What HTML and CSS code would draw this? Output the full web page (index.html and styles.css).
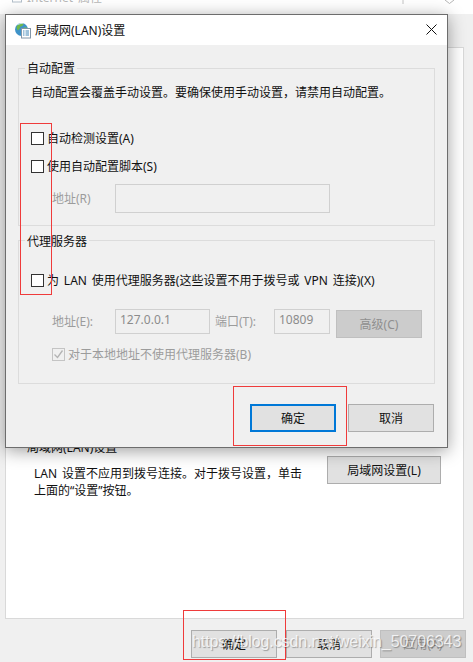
FILE: index.html
```html
<!DOCTYPE html>
<html lang="zh-CN">
<head>
<meta charset="utf-8">
<title>局域网(LAN)设置</title>
<link rel="stylesheet" href="styles.css">
</head>
<body>
<div class="screen">
  <svg class="defs" width="0" height="0">
    <symbol id="net-icon" viewBox="0 0 18 18">
      <circle cx="7.500" cy="7.500" r="6.500" fill="#3f93c9"/>
      <path d="M3 4c2-2 4-3 6-2.500 1 1 0 2-1 2.500-1 1-2 0-2 1.500 0 1.500-1 1-1.500 2.500C3.500 9 2 6 3 4z" fill="#6fb84a"/>
      <path d="M9 6c2-1 4-1 4.500 1 0 2-1 3-2 3-1-1-3-2-2.500-4z" fill="#79bd50"/>
      <path d="M2.500 3.500C4 1.500 7 .5 10 1.500 7 1.500 4.500 2.500 2.500 3.500z" fill="#d5ecf8"/>
      <rect x="7.500" y="6.500" width="9" height="9.500" fill="#fff" stroke="#8296a8"/>
      <path d="M9 9h1.500M11.500 9h3.500M9 11h1.500M11.500 11h3.500M9 13h1.500M11.500 13h3.500" stroke="#3f86b8"/>
    </symbol>
  </svg>
  <div class="back-window">
    <div class="back-title">
      <svg class="back-icon" width="18" height="18"><use href="#net-icon"/></svg>
      <span class="back-title-text">Internet 属性</span>
      <span class="back-controls">
        <svg class="back-max" width="2" height="4" viewBox="0 0 2 4"><path d="M1 0v4" stroke="#c4c4c4"/></svg>
        <svg class="back-close" width="11" height="4" viewBox="0 0 11 4"><path d="M1 0l4.500 3.500L10 0" fill="none" stroke="#b5b5b5"/></svg>
      </span>
    </div>
    <div class="back-panel">
      <div class="back-legend">局域网(LAN)设置</div>
      <div class="lan-row">
        <p class="lan-text">LAN 设置不应用到拨号连接。对于拨号设置，单击<br>上面的“设置”按钮。</p>
        <button class="btn btn-lan" type="button">局域网设置(L)</button>
      </div>
    </div>
    <div class="back-footer">
      <button class="btn" type="button">确定</button>
      <button class="btn" type="button">取消</button>
      <button class="btn btn-disabled" type="button">应用(A)</button>
    </div>
  </div>

  <div class="dialog">
    <div class="dialog-title">
      <svg class="globe" width="18" height="18"><use href="#net-icon"/></svg>
      <span class="dialog-title-text">局域网(LAN)设置</span>
      <svg class="close" width="11" height="11" viewBox="0 0 11 11"><path d="M.5.500l10 10M10.500.500l-10 10" stroke="#111" stroke-width="1"/></svg>
    </div>
    <div class="dialog-body">
      <fieldset class="group group-auto">
        <legend>自动配置</legend>
        <p class="desc">自动配置会覆盖手动设置。要确保使用手动设置，请禁用自动配置。</p>
        <label class="check check-first"><span class="box"></span>自动检测设置(A)</label>
        <label class="check check-second"><span class="box"></span>使用自动配置脚本(S)</label>
        <div class="script-row">
          <span class="muted field-label">地址(R)</span>
          <span class="field field-script"></span>
        </div>
      </fieldset>
      <fieldset class="group group-proxy">
        <legend>代理服务器</legend>
        <label class="check check-proxy"><span class="box"></span><span class="proxy-text">为 LAN 使用代理服务器(这些设置不用于拨号或 VPN 连接)(X)</span></label>
        <div class="proxy-row">
          <span class="muted field-label">地址(E):</span>
          <span class="field field-addr">127.0.0.1</span>
          <span class="muted port-label">端口(T):</span>
          <span class="field field-port">10809</span>
          <button class="btn btn-disabled btn-adv" type="button">高级(C)</button>
        </div>
        <label class="check check-bypass muted">
          <span class="box box-disabled"><svg width="11" height="11" viewBox="0 0 11 11"><path d="M1.500 5.500l3 3 5-7" fill="none" stroke="#b3b3b3" stroke-width="1.300"/></svg></span>对于本地地址不使用代理服务器(B)
        </label>
      </fieldset>
      <div class="dialog-actions">
        <button class="btn btn-default" type="button">确定</button>
        <button class="btn" type="button">取消</button>
      </div>
    </div>
  </div>

  <div class="mark mark-checks"></div>
  <div class="mark mark-ok"></div>
  <div class="mark mark-footer"></div>
  <div class="watermark">https://blog.csdn.net/weixin_50706343</div>
</div>
</body>
</html>
```

FILE: styles.css
```css
* { box-sizing: border-box; }
html, body { margin: 0; padding: 0; }
body { background: #f0f0f0; }
.defs { position: absolute; }
.screen {
  position: relative;
  width: 473px;
  height: 662px;
  overflow: hidden;
  background: #f0f0f0;
  color: #111;
  font: 12px/17px "Noto Sans", "Noto Sans CJK SC", sans-serif;
  word-spacing: 1.75px;
}
.back-window { display: flex; flex-direction: column; height: 662px; }
.back-title {
  display: flex;
  align-items: flex-start;
  height: 14px;
  background: #fff;
  padding-left: 5px;
  overflow: hidden;
}
.back-icon { flex: none; margin-top: -14px; opacity: .6; }
.back-title-text { margin: -11px 0 0 4px; color: #b8b8b8; white-space: nowrap; }
.back-controls { display: flex; align-items: flex-start; gap: 40px; margin-left: auto; margin-right: 18px; }
.back-panel {
  height: 572px;
  margin: 33px 9px 0 5px;
  padding: 0 22px 0 21px;
  background: #fff;
  border: 1px solid #d9d9d9;
}
.back-legend { margin-top: 391px; }
.lan-row { display: flex; align-items: flex-start; justify-content: space-between; padding-left: 7px; }
.lan-text { margin: 9px 0 0; white-space: nowrap; }
.back-footer { display: flex; gap: 9px; justify-content: flex-end; padding: 11px 7px 0 0; }
.back-footer .btn:last-child { margin-left: -1px; }

.btn {
  flex: none;
  width: 86px;
  height: 28px;
  padding: 0;
  background: #e1e1e1;
  border: 1px solid #adadad;
  color: #111;
  font: inherit;
}
.btn-lan { width: 114px; }
.btn-disabled { background: #cccccc; border-color: #bfbfbf; color: #8f8f8f; }
.btn-default { border: 2px solid #0078d7; }

.dialog {
  position: absolute;
  left: 5px;
  top: 14px;
  width: 443px;
  height: 434px;
  display: flex;
  flex-direction: column;
  border: 1px solid #6d6d6d;
  background: #f0f0f0;
  box-shadow: 0 3px 16px rgba(0, 0, 0, .38);
}
.dialog-title {
  display: flex;
  align-items: center;
  flex: none;
  height: 30px;
  padding: 0 10px 0 8px;
  background: #fff;
}
.globe { flex: none; margin-top: 1px; }
.dialog-title-text { margin-left: 3px; white-space: nowrap; }
.close { margin: 0 0 2px auto; }
.dialog-body { flex: 1; padding: 0 12px; display: flex; flex-direction: column; }
.group {
  width: 417px;
  min-width: 0;
  margin: 0;
  padding: 0 12px;
  border: 1px solid #dcdcdc;
}
.group legend { margin-left: -6px; padding: 0 2px; line-height: 17px; }
.group-auto { height: 166px; margin-top: 15px; }
.group-proxy { height: 152px; margin-top: 6px; }
.group-proxy legend { position: relative; top: 1px; }
.desc { margin: 7px 0 0; white-space: nowrap; }
.check { display: flex; align-items: center; white-space: nowrap; }
.check-first { margin-top: 29px; }
.check-second { margin-top: 11px; }
.check-proxy { margin-top: 23px; }
.box {
  flex: none;
  width: 13px;
  height: 13px;
  margin-right: 3px;
  background: #fff;
  border: 1px solid #333;
}
.box-disabled {
  display: flex;
  align-items: center;
  justify-content: center;
  background: #f0f0f0;
  border-color: #c4c4c4;
}
.muted { color: #9c9c9c; }
.field {
  display: block;
  flex: none;
  height: 25px;
  padding: 0 0 0 4px;
  background: #f0f0f0;
  border: 1px solid #d0d0d0;
  color: #8c8c8c;
  line-height: 20px;
}
.script-row { display: flex; align-items: center; margin-top: 9px; padding-left: 21px; }
.field-label { width: 63px; }
.field-script { width: 215px; height: 29px; }
.proxy-row { display: flex; align-items: flex-start; margin-top: 20px; padding-left: 21px; }
.proxy-row .muted { line-height: 25px; }
.field-addr { width: 95px; }
.port-label { margin-left: 5px; width: 59px; }
.field-port { width: 56px; }
.btn-adv { margin: 1px 0 0 6px; }
.check-bypass { margin-top: 8px; margin-left: 21px; }
.check-bypass.muted { line-height: 17px; }
.dialog-actions { display: flex; justify-content: flex-end; gap: 12px; padding: 20px 1px 0 0; }

.mark { position: absolute; border: 1px solid #ef3b3b; }
.mark-checks { left: 20px; top: 123px; width: 32px; height: 172px; }
.mark-ok { left: 233px; top: 386px; width: 114px; height: 60px; }
.mark-footer { left: 183px; top: 610px; width: 103px; height: 50px; }
.watermark {
  position: absolute;
  left: 192px;
  top: 631px;
  color: rgba(255, 255, 255, .78);
  font: 16px/22px "Liberation Sans", sans-serif;
  letter-spacing: -.08px;
  word-spacing: 0;
  text-shadow: 1px 1px 1px rgba(0, 0, 0, .3);
  white-space: nowrap;
}
```
